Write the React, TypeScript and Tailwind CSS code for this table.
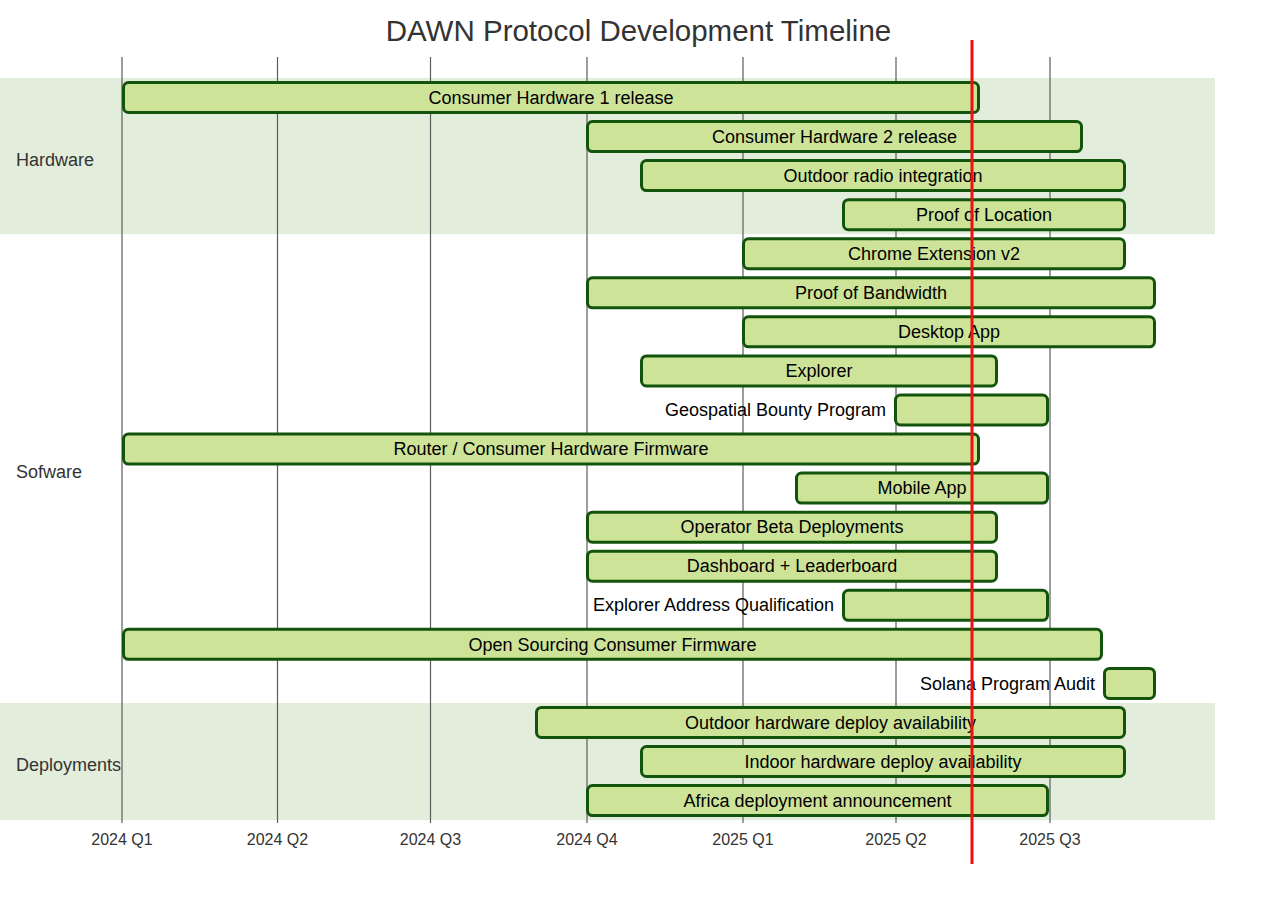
import React from "react";

type Row = { l: string; x1: number; x2: number; out?: boolean };

const rows: Row[] = [
  { l: "Consumer Hardware 1 release", x1: 122, x2: 980 },
  { l: "Consumer Hardware 2 release", x1: 586, x2: 1083 },
  { l: "Outdoor radio integration", x1: 640, x2: 1126 },
  { l: "Proof of Location", x1: 842, x2: 1126 },
  { l: "Chrome Extension v2", x1: 742, x2: 1126 },
  { l: "Proof of Bandwidth", x1: 586, x2: 1156 },
  { l: "Desktop App", x1: 742, x2: 1156 },
  { l: "Explorer", x1: 640, x2: 998 },
  { l: "Geospatial Bounty Program", x1: 894, x2: 1049, out: true },
  { l: "Router / Consumer Hardware Firmware", x1: 122, x2: 980 },
  { l: "Mobile App", x1: 795, x2: 1049 },
  { l: "Operator Beta Deployments", x1: 586, x2: 998 },
  { l: "Dashboard + Leaderboard", x1: 586, x2: 998 },
  { l: "Explorer Address Qualification", x1: 842, x2: 1049, out: true },
  { l: "Open Sourcing Consumer Firmware", x1: 122, x2: 1103 },
  { l: "Solana Program Audit", x1: 1103, x2: 1156, out: true },
  { l: "Outdoor hardware deploy availability", x1: 535, x2: 1126 },
  { l: "Indoor hardware deploy availability", x1: 640, x2: 1126 },
  { l: "Africa deployment announcement", x1: 586, x2: 1049 },
];

const ticks = [
  { x: 122, l: "2024 Q1" },
  { x: 277.5, l: "2024 Q2" },
  { x: 430.5, l: "2024 Q3" },
  { x: 587, l: "2024 Q4" },
  { x: 743, l: "2025 Q1" },
  { x: 896, l: "2025 Q2" },
  { x: 1050, l: "2025 Q3" },
];

const ROW_TOP = 78;
const ROW_H = 39.06;
const OFFSET = 48;

const sections = [
  { l: "Hardware", start: 0, n: 4, bg: true },
  { l: "Sofware", start: 4, n: 12, bg: false },
  { l: "Deployments", start: 16, n: 3, bg: true },
];

export default function App() {
  const font = '"Liberation Sans", Arial, sans-serif';
  return (
    <div className="w-[1280px] h-[908px] bg-white" style={{ fontFamily: font }}>
      <h1 className="h-[48px] pt-[14px] leading-[34px] text-[29.5px] font-normal text-[#333] text-center pr-[3px] font-['Liberation_Sans',Arial,sans-serif]">
        DAWN Protocol Development Timeline
      </h1>
      <svg
        width={1280}
        height={860}
        viewBox={`0 ${OFFSET} 1280 860`}
        className="block overflow-visible"
        fontFamily={font}
      >
        {sections.map((s) =>
          s.bg ? (
            <rect
              key={s.l + "bg"}
              x={0}
              y={ROW_TOP + s.start * ROW_H}
              width={1215}
              height={s.n * ROW_H}
              fill="#e2eedb"
            />
          ) : null
        )}
        {ticks.map((t) => (
          <g key={t.l}>
            <line x1={t.x} x2={t.x} y1={57} y2={823} stroke="#5c5c5c" strokeWidth={1.2} />
            <text x={t.x} y={845} textAnchor="middle" fontSize={16} fill="#333">
              {t.l}
            </text>
          </g>
        ))}
        {sections.map((s) => (
          <text
            key={s.l}
            x={16}
            y={ROW_TOP + (s.start + s.n / 2) * ROW_H + 9.5}
            fontSize={18}
            fill="#333"
          >
            {s.l}
          </text>
        ))}
        {rows.map((r, i) => {
          const top = ROW_TOP + i * ROW_H;
          const cy = top + 19.5;
          return (
            <g key={r.l}>
              <rect
                x={r.x1 + 1.5}
                y={top + 4.5}
                width={r.x2 - r.x1 - 3}
                height={30}
                rx={5}
                fill="#cde498"
                stroke="#13540c"
                strokeWidth={3}
              />
              {r.out ? (
                <text x={r.x1 - 8} y={cy + 6.2} textAnchor="end" fontSize={18} fill="#000">
                  {r.l}
                </text>
              ) : (
                <text x={(r.x1 + r.x2) / 2} y={cy + 6.2} textAnchor="middle" fontSize={18} fill="#000">
                  {r.l}
                </text>
              )}
            </g>
          );
        })}
        <line x1={972} x2={972} y1={40} y2={864} stroke="#ee1111" strokeWidth={3} />
      </svg>
    </div>
  );
}
